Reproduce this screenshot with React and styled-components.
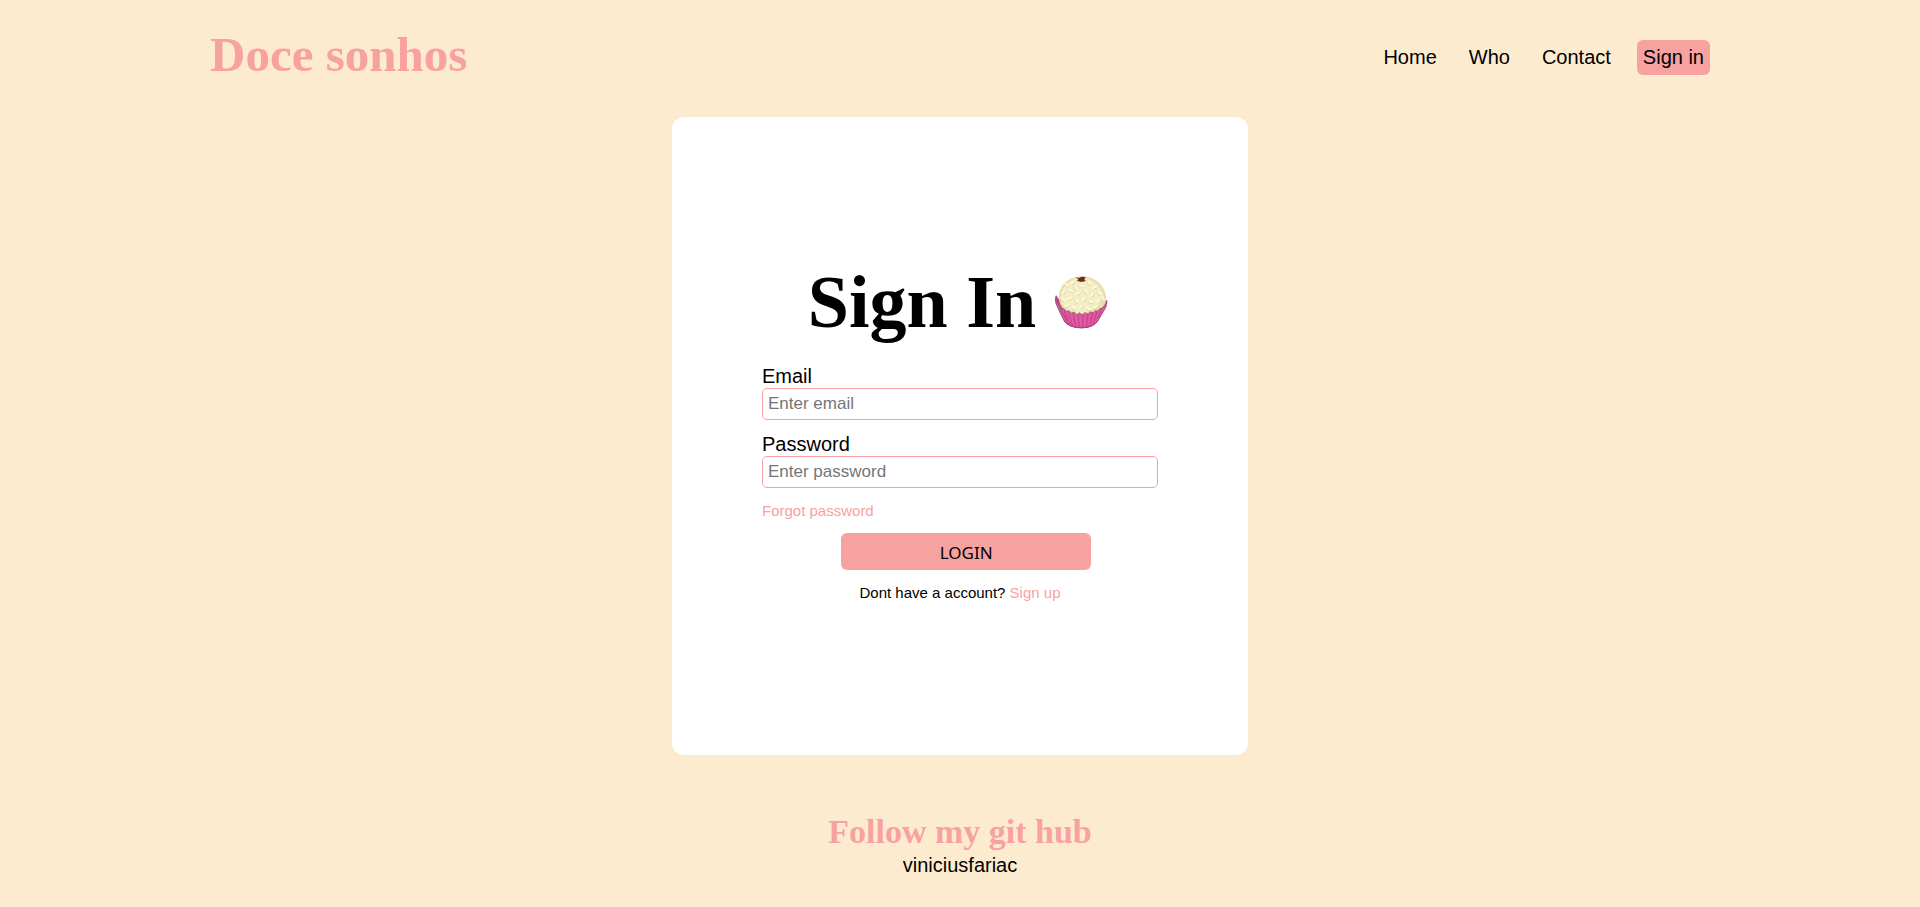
import React from "react";
import styled, { createGlobalStyle, ThemeProvider } from "styled-components";

const theme = {
  cream: "#fdebd0",
  pink: "#f8a1a1",
  sans: '"Liberation Sans", Arial, sans-serif',
  serif: 'Georgia, "Liberation Serif", serif',
};

const GlobalStyle = createGlobalStyle`
  * { box-sizing: border-box; margin: 0; padding: 0; }
  body {
    background: ${theme.cream};
    color: #000;
    font-family: ${theme.sans};
    font-size: 20px;
    line-height: 23px;
  }
  a { color: inherit; text-decoration: none; }
`;

const Page = styled.div`
  display: flex;
  flex-direction: column;
  align-items: center;
  min-height: 100vh;
`;

const Header = styled.header`
  display: flex;
  align-items: center;
  justify-content: space-between;
  width: 100%;
  max-width: 1500px;
  padding: 30px 0 32px;
`;

const Heading = styled.h2`
  font-family: ${(p) => p.theme.serif};
  font-weight: bold;
  color: ${(p) => p.theme.pink};
  font-size: 34px;
  line-height: 34px;
`;

const Brand = styled(Heading)`
  font-size: 49px;
  line-height: 49px;
  padding-bottom: 6px;
`;

const Nav = styled.nav`
  display: flex;
  gap: 20px;
`;

const NavLink = styled.a`
  padding: 6px;
  border-radius: 6px;
  background: ${(p) => (p.$active ? p.theme.pink : "transparent")};
`;

const Card = styled.main`
  width: 30%;
  min-width: 480px;
  padding: 149px 90px 154px;
  background: #fff;
  border-radius: 12px;
`;

const Title = styled.h1`
  display: flex;
  align-items: center;
  justify-content: center;
  gap: 18px;
  margin-bottom: 27px;
  padding-right: 4px;
  font-family: ${(p) => p.theme.serif};
  font-size: 74px;
  line-height: 72px;
  white-space: nowrap;
`;

const Form = styled.form`
  display: flex;
  flex-direction: column;
  gap: 14px;
`;

const Fields = styled.div`
  display: flex;
  flex-direction: column;
  gap: 13px;
`;

const Field = styled.div`
  display: flex;
  flex-direction: column;
`;

const Input = styled.input`
  width: 100%;
  height: 32px;
  padding: 0 5px;
  border: 1px solid ${(p) => p.theme.pink};
  border-radius: 5px;
  background: #fff;
  font-family: ${(p) => p.theme.sans};
  font-size: 17px;
  &::placeholder { color: #757575; }
`;

const SmallLink = styled.a`
  align-self: flex-start;
  color: ${(p) => p.theme.pink};
  font-size: 15px;
  line-height: 17px;
`;

const LoginButton = styled.button`
  width: 250px;
  height: 37px;
  margin-left: 20%;
  padding-top: 2px;
  border: 0;
  border-radius: 6px;
  background: ${(p) => p.theme.pink};
  color: #000;
  font-family: Verdana, "Noto Sans", sans-serif;
  font-size: 17px;
  line-height: 23px;
`;

const Account = styled.p`
  text-align: center;
  font-size: 15px;
  line-height: 17px;
`;

const Footer = styled.footer`
  display: flex;
  flex-direction: column;
  align-items: center;
  gap: 5px;
  padding: 60px 0 30px;
`;

const grains = [
  [78, 58, 30], [96, 52, -40], [122, 62, 20], [145, 52, 60], [163, 66, -30],
  [70, 80, -50], [91, 76, 15], [112, 84, -35], [136, 79, 50], [155, 88, -60],
  [178, 84, 35], [68, 103, 40], [88, 99, -20], [108, 106, 60], [130, 101, -45],
  [151, 109, 20], [174, 106, -40], [78, 121, -15], [99, 127, 40], [121, 124, -60],
  [143, 130, 25], [165, 124, -30], [186, 98, 60], [105, 67, 70], [118, 143, 0],
];

const ridges = [
  [58, 130, 79, 165], [70, 134, 86, 176], [83, 141, 96, 182], [97, 144, 106, 185],
  [112, 146, 116, 186], [127, 146, 126, 186], [142, 144, 137, 184],
  [156, 140, 148, 181], [170, 134, 158, 174], [184, 127, 170, 160],
];

function Candy() {
  return (
    <svg width="54" height="54" viewBox="40 28 162 162" aria-hidden="true">
      <path d="M46 88 Q39 101 47 119 L66 159 Q77 186 123 187 Q157 187 172 165 L194 128 Q203 110 199 103 L188 108 L60 108Z" fill="#b84b87" />
      <path d="M56 101 C50 68 77 34 119 32 C166 31 196 63 197 99 C196 124 171 144 121 151 C82 148 56 128 56 101Z" fill="#e9dfad" />
      <path d="M61 100 C59 66 86 39 120 38 C156 38 181 59 188 91 C183 123 151 138 119 143 C84 139 63 123 61 100Z" fill="#f3edc8" />
      {grains.map(([x, y, angle]) => (
        <g key={`${x}-${y}`} transform={`rotate(${angle} ${x} ${y})`}>
          <rect x={x - 8} y={y - 2} width="17" height="7" rx="3" fill="#e3d8a4" />
          <rect x={x - 8} y={y - 4} width="16" height="6" rx="3" fill="#fffbe0" />
        </g>
      ))}
      <path d="M46 113 L55 122 L62 131 L70 129 L77 138 L85 135 L92 143 L100 139 L108 147 L117 141 L125 148 L133 141 L142 146 L149 138 L157 143 L163 135 L171 138 L177 129 L184 131 L194 119 L197 122 L175 160 Q162 186 124 187 Q82 187 68 160Z" fill="#e25aa5" stroke="#a86373" strokeWidth="3" />
      {ridges.map(([x1, y1, x2, y2]) => (
        <path key={x1} d={`M${x1} ${y1}L${x2} ${y2}`} stroke="#c4458d" strokeWidth="4" />
      ))}
      <path d="M70 165 Q82 186 124 186 Q158 186 172 164" fill="none" stroke="#aa4077" strokeWidth="3" />
      <path d="M105 34 L115 37 L123 33 L135 34 L131 40 L135 46 L123 49 L109 46 L113 41Z" fill="#65301f" />
    </svg>
  );
}

export default function App() {
  return (
    <ThemeProvider theme={theme}>
      <GlobalStyle />
      <Page>
        <Header>
          <Brand>Doce sonhos</Brand>
          <Nav>
            <NavLink href="#home">Home</NavLink>
            <NavLink href="#who">Who</NavLink>
            <NavLink href="#contact">Contact</NavLink>
            <NavLink href="#signin" $active>Sign in</NavLink>
          </Nav>
        </Header>
        <Card>
          <Title>Sign In <Candy /></Title>
          <Form onSubmit={(e) => e.preventDefault()}>
            <Fields>
              <Field>
                <label htmlFor="email">Email</label>
                <Input id="email" type="email" placeholder="Enter email" />
              </Field>
              <Field>
                <label htmlFor="password">Password</label>
                <Input id="password" type="password" placeholder="Enter password" />
              </Field>
            </Fields>
            <SmallLink href="#forgot">Forgot password</SmallLink>
            <LoginButton type="submit">LOGIN</LoginButton>
            <Account>
              Dont have a account? <SmallLink href="#signup">Sign up</SmallLink>
            </Account>
          </Form>
        </Card>
        <Footer>
          <Heading>Follow my git hub</Heading>
          <a href="#viniciusfariac">viniciusfariac</a>
        </Footer>
      </Page>
    </ThemeProvider>
  );
}
